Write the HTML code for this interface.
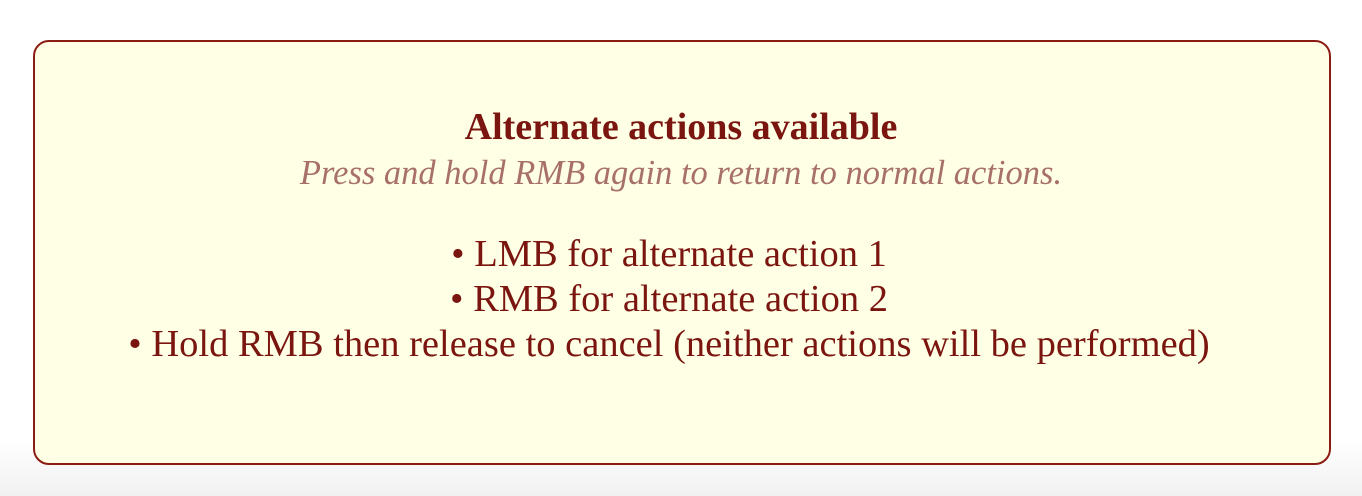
<!DOCTYPE html>
<html><head><style>
html,body{margin:0;padding:0;}
body{width:1362px;height:496px;background:linear-gradient(#fff 0,#fff 440px,#f1f1f1 496px);position:relative;overflow:hidden;font-family:"Liberation Serif",serif;}
.box{position:absolute;left:33px;top:40px;width:1294px;height:421px;border:2px solid #8b1c14;border-radius:16px;background:#ffffe5;}
.w{position:absolute;left:0;top:0;width:1362px;color:#7a1510;text-align:center;}
.w div{position:absolute;left:0;right:0;white-space:nowrap;}
.t{top:107px;font-weight:bold;font-size:38px;line-height:40px;}
.s{top:155px;font-style:italic;font-size:34.5px;line-height:36px;color:#a8706a;}
.l{font-size:38.5px;line-height:45px;left:-24px!important;}
</style></head><body>
<div class="box"></div>
<div class="w">
<div class="t">Alternate actions available</div>
<div class="s">Press and hold RMB again to return to normal actions.</div>
<div class="l" style="top:232px">• LMB for alternate action 1</div>
<div class="l" style="top:277px">• RMB for alternate action 2</div>
<div class="l" style="top:322px">• Hold RMB then release to cancel (neither actions will be performed)</div>
</div>
</body></html>
